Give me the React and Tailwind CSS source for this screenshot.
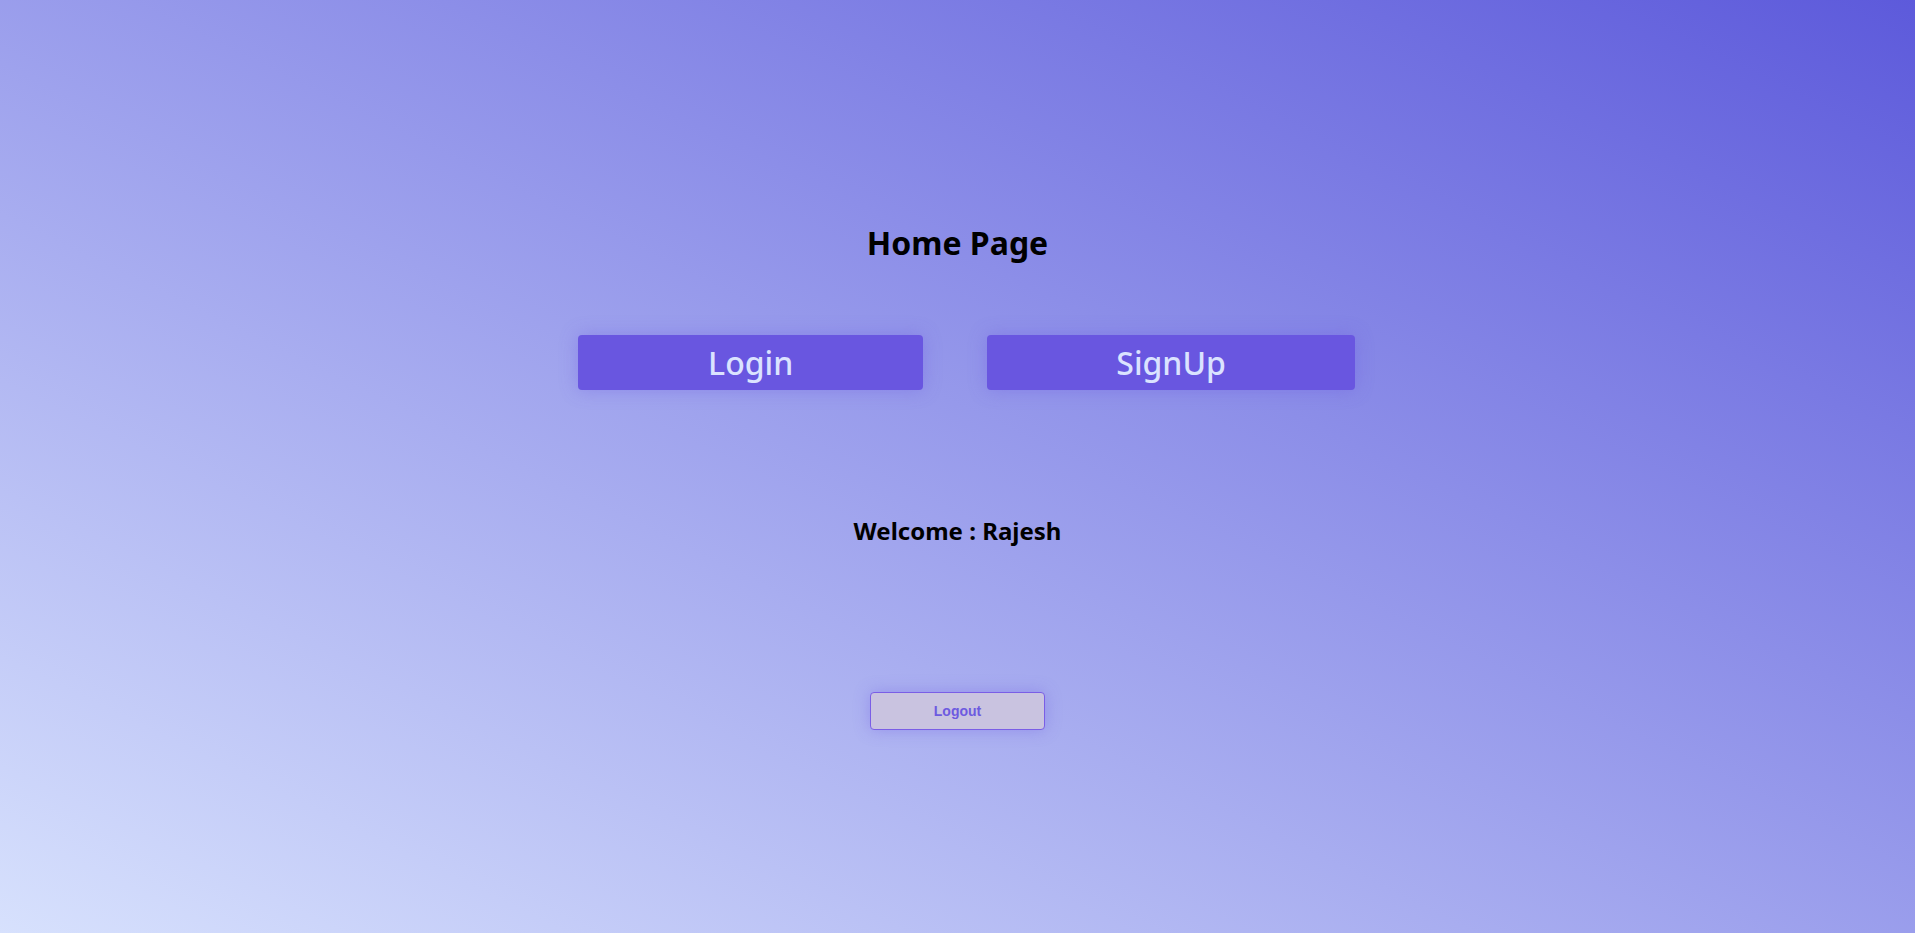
export default function App() {
  const user = "Rajesh";

  return (
    <div className="min-h-screen w-full bg-[linear-gradient(to_top_right,#d7e1fd,#5d5adb)] flex flex-col items-center font-['Noto_Sans',sans-serif]">
      <h1 className="mt-[223px] text-[32px] leading-[40px] font-bold text-black">Home Page</h1>

      <div className="mt-[72px] flex gap-[64px] pl-[18px]">
        <button className="h-[55px] px-[130px] rounded-[4px] bg-[#6956e0] text-[#dbe3ff] text-[32px] leading-none font-medium shadow-[0_0_18px_rgba(105,86,224,0.35)]">
          Login
        </button>
        <button className="h-[55px] px-[129px] rounded-[4px] bg-[#6956e0] text-[#dbe3ff] text-[32px] leading-none font-medium shadow-[0_0_18px_rgba(105,86,224,0.35)]">
          SignUp
        </button>
      </div>

      <h2 className="mt-[125px] text-[24px] leading-[32px] font-bold text-black">Welcome : {user}</h2>

      <button className="mt-[145px] w-[175px] h-[38px] rounded-[4px] border border-[#7a5ee6] bg-[#c9c3e0] text-[#6d5ae0] text-[14px] font-bold font-['Liberation_Sans',Arial,sans-serif] shadow-[0_0_16px_rgba(105,86,224,0.35)]">
        Logout
      </button>
    </div>
  );
}
